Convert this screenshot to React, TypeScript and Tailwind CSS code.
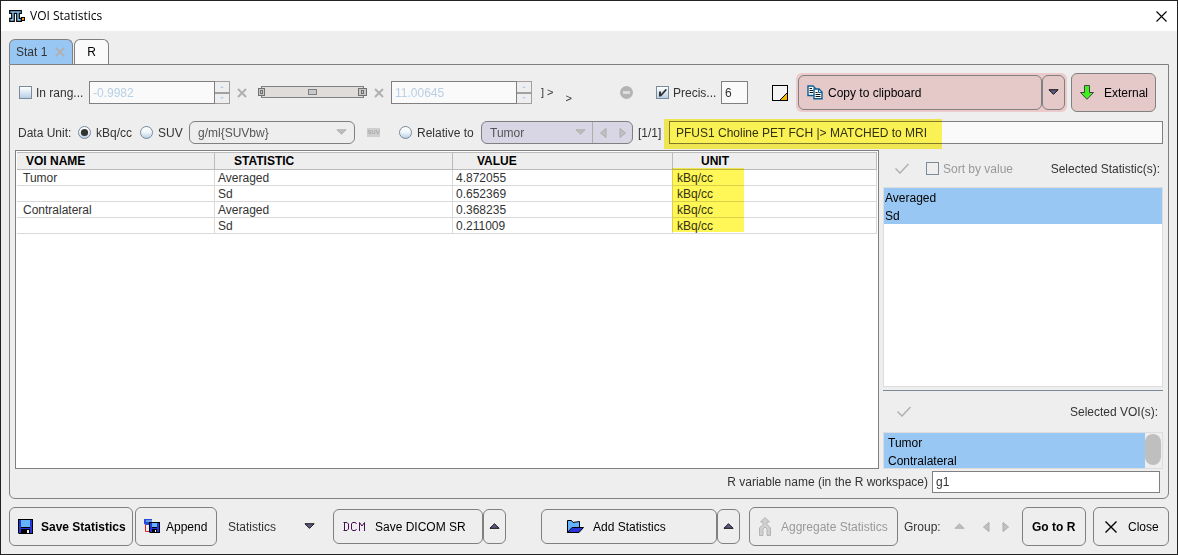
import type { ReactNode } from "react"

interface StatRow {
  voi: string
  statistic: string
  value: string
  unit: string
}

const rows: StatRow[] = [
  { voi: "Tumor", statistic: "Averaged", value: "4.872055", unit: "kBq/cc" },
  { voi: "", statistic: "Sd", value: "0.652369", unit: "kBq/cc" },
  { voi: "Contralateral", statistic: "Averaged", value: "0.368235", unit: "kBq/cc" },
  { voi: "", statistic: "Sd", value: "0.211009", unit: "kBq/cc" },
]

const arrowPaths = {
  up: "M5.5 0.5 L10.5 5.5 H0.5 Z",
  down: "M0.5 0.5 H10.5 L5.5 5.5 Z",
}

function Arrow({ direction, disabled }: { direction: "up" | "down"; disabled?: boolean }) {
  return (
    <svg width="11" height="7" viewBox="-0.5 0 12 7" className="block shrink-0" aria-hidden="true">
      <path
        d={arrowPaths[direction]}
        fill={disabled ? "#bdbdbd" : "#5c5c84"}
        stroke={disabled ? "#b0b0b0" : "#000"}
      />
    </svg>
  )
}

function SideArrow({ direction }: { direction: "left" | "right" }) {
  return (
    <svg width="7" height="10" viewBox="0 0 7 10" className="block" aria-hidden="true">
      <path d={direction === "left" ? "M6 0.5 V9.5 L0.5 5 Z" : "M1 0.5 V9.5 L6.5 5 Z"} fill="#c0c0c0" stroke="#adadad" />
    </svg>
  )
}

function Cross() {
  return (
    <svg width="10" height="10" viewBox="0 0 10 10" className="block shrink-0" aria-hidden="true">
      <path d="M1 1 L9 9 M9 1 L1 9" stroke="#b0b0b0" strokeWidth="2" />
    </svg>
  )
}

function ApplyButton({ label }: { label: string }) {
  return (
    <button type="button" aria-label={label} disabled>
      <svg width="14" height="11" viewBox="0 0 14 11" aria-hidden="true">
        <path d="M0.5 5.5 L5 10 L13.5 1" fill="none" stroke="#b0b0b0" strokeWidth="1.5" />
      </svg>
    </button>
  )
}

function Checkbox({ id, checked, plain }: { id: string; checked?: boolean; plain?: boolean }) {
  return (
    <span className="relative block size-[13px] shrink-0">
      <input
        id={id}
        type="checkbox"
        defaultChecked={checked}
        disabled={plain}
        className={
          plain
            ? "block size-[13px] appearance-none border border-[#7a8a99] bg-[#eeeeee]"
            : "block size-[13px] appearance-none border border-[#7a8a99] bg-linear-to-b from-white to-[#b8cfe5]"
        }
      />
      {checked && (
        <svg width="13" height="13" viewBox="0 0 13 13" className="pointer-events-none absolute inset-0" aria-hidden="true">
          <path d="M3 5.5 H5 V8 L9.5 3 H10.5 V4.5 L5 10.5 H3 Z" fill="#333" />
        </svg>
      )}
    </span>
  )
}

function Radio({ id, name, checked }: { id: string; name: string; checked?: boolean }) {
  return (
    <span className="relative block size-[13px] shrink-0">
      <input
        id={id}
        name={name}
        type="radio"
        defaultChecked={checked}
        className="block size-[13px] appearance-none rounded-full border border-[#7a8a99] bg-linear-to-b from-white via-[#eef4fa] to-[#b8cfe5]"
      />
      {checked && (
        <svg width="13" height="13" viewBox="0 0 13 13" className="pointer-events-none absolute inset-0" aria-hidden="true">
          <circle cx="6.5" cy="6.5" r="3.6" fill="#333" />
        </svg>
      )}
    </span>
  )
}

function RangeField({ label, value }: { label: string; value: string }) {
  return (
    <div className="flex h-[23px] shrink-0">
      <input
        aria-label={label}
        defaultValue={value}
        className="w-[126px] border border-[#808080] bg-[#fafafa] px-[3px] text-[#b8cfe5]"
      />
      <div className="flex w-[15px] flex-col">
        <button type="button" aria-label={`${label} up`} className="flex flex-1 items-center justify-center border border-l-0 border-[#a0a0a0]">
          <svg width="4" height="2" viewBox="0 0 4 2" aria-hidden="true">
            <path d="M2 0 L4 2 H0 Z" fill="#b8cfe5" />
          </svg>
        </button>
        <button type="button" aria-label={`${label} down`} className="flex flex-1 items-center justify-center border border-l-0 border-[#a0a0a0]">
          <svg width="4" height="2" viewBox="0 0 4 2" aria-hidden="true">
            <path d="M0 0 H4 L2 2 Z" fill="#b8cfe5" />
          </svg>
        </button>
      </div>
    </div>
  )
}

function RangeSlider() {
  return (
    <svg width="110" height="12" viewBox="0 0 110 12" className="mb-0.5 shrink-0" aria-hidden="true">
      <rect x="3.5" y="0.5" width="102" height="11" fill="#e0dcda" stroke="#808080" />
      <rect x="0.5" y="2.5" width="6" height="7" fill="#c8c8c8" stroke="#707070" />
      <rect x="2.5" y="4.5" width="2" height="3" fill="#c8c8c8" stroke="#707070" />
      <rect x="50.5" y="3.5" width="8" height="5" fill="#c8c8c8" stroke="#808080" />
      <rect x="100.5" y="2.5" width="8" height="7" fill="#c8c8c8" stroke="#707070" />
      <rect x="103.5" y="4.5" width="2" height="3" fill="#c8c8c8" stroke="#707070" />
    </svg>
  )
}

function CopyIcon() {
  return (
    <svg width="16" height="15" viewBox="0 0 16 15" aria-hidden="true">
      <path d="M1 1 H6 L8.5 3.5 V10.5 H1 Z" fill="#fff" stroke="#0b5c94" strokeWidth="1.4" />
      <path d="M2.5 3.5 H5 M2.5 5.5 H6 M2.5 7.5 H6" stroke="#111" />
      <path d="M7 4 H12 L15 7 V13.8 H7 Z" fill="#fff" stroke="#0b5c94" strokeWidth="1.4" />
      <path d="M11.5 4 V7.5 H15" fill="none" stroke="#0b5c94" />
      <path d="M8.5 7.5 H10.5 M8.5 9.5 H13.5 M8.5 11.5 H13.5" stroke="#111" />
    </svg>
  )
}

function SaveIcon() {
  return (
    <svg width="15" height="15" viewBox="0 0 15 15" aria-hidden="true">
      <path d="M0 0 H15 V15 H1 L0 14 Z" fill="#000" />
      <path d="M1 1 H3 V9 H12 V1 H14 V14 H12 V10 H3 V14 H1 Z" fill="#2a35d8" />
      <path d="M3 1 H12 V8 H3 Z" fill="#63b4ff" />
      <path d="M9 11 H11 V14 H9 Z" fill="#eee" />
    </svg>
  )
}

function AppendIcon() {
  return (
    <svg width="16" height="15" viewBox="0 0 16 15" aria-hidden="true">
      <path d="M0 0 H8 V6 H2 L0 5 Z" fill="#2a4ad8" />
      <path d="M2 1 H8 V3 H2 Z" fill="#6d9ae8" />
      <path d="M1.5 6 V12.5 H6" fill="none" stroke="#e02020" />
      <path d="M5 3 H16 V14 H6 L5 13 Z" fill="#000" />
      <path d="M6 4 H8 V9 H13 V4 H15 V13 H13 V10 H8 V13 H6 Z" fill="#2a35d8" />
      <path d="M8 4 H13 V8 H8 Z" fill="#63b4ff" />
      <path d="M11 11 H12 V13 H11 Z" fill="#eee" />
    </svg>
  )
}

function DicomIcon() {
  return (
    <svg width="22" height="9" viewBox="0 0 22 9" fill="none" stroke="#4a0d55" role="img" aria-label="DCM">
      <path d="M0.5 0.5 H4 L5.5 2 V7 L4 8.5 H0.5 M1.5 0.5 V8.5" />
      <path d="M13.5 2 L12.5 0.5 H9.5 L8.5 2 V7 L9.5 8.5 H12.5 L13.5 7" />
      <path d="M16.5 9 V0.5 L19 4 L21.5 0.5 V9" />
    </svg>
  )
}

function FolderIcon() {
  return (
    <svg width="17" height="13" viewBox="0 0 17 13" aria-hidden="true">
      <path d="M0.5 12.5 V0.5 H4.5 L6 2.5 L12.5 1.5 V7.5" fill="#63b4ff" stroke="#000" />
      <path d="M0.5 12.5 L5 7.5 H16.5 L12 12.5 Z" fill="#2a35d8" stroke="#000" />
    </svg>
  )
}

function MergeIcon() {
  return (
    <svg width="12" height="19" viewBox="0 0 12 19" aria-hidden="true">
      <path
        d="M6 0.5 L10.5 5 H8 V7.5 L11.5 11 V18.5 H8 V12 L6 10 L4 12 V18.5 H0.5 V11 L4 7.5 V5 H1.5 Z"
        fill="#d0d0d0"
        stroke="#b4b4b4"
      />
    </svg>
  )
}

interface ToolButtonProps {
  children: ReactNode
  className: string
  disabled?: boolean
}

function ToolButton({ children, className, disabled }: ToolButtonProps) {
  return (
    <button
      type="button"
      disabled={disabled}
      className={`flex shrink-0 items-center rounded-md border border-[#808080] text-black disabled:text-[#999999] ${className}`}
    >
      {children}
    </button>
  )
}

function TitleBar() {
  return (
    <header className="flex h-[30px] items-center gap-1 bg-white pr-[10px] pl-2 font-['Open_Sans',sans-serif] text-black">
      <svg width="17" height="12" viewBox="0 0 17 12" aria-hidden="true">
        <path
          d="M0.7 0.7 H12.3 V3.3 H10.3 V8.3 H12.3 V11.3 H7.7 V3.3 H5.3 V11.3 H0.7 V8.3 H2.7 V3.3 H0.7 Z"
          fill="#86c5f4"
          stroke="#000"
          strokeWidth="1.2"
        />
        <rect x="12.5" y="7.5" width="3" height="3" fill="#f59a1c" stroke="#000" />
      </svg>
      <h1 className="flex-1">VOI Statistics</h1>
      <button type="button" aria-label="Close window">
        <svg width="11" height="11" viewBox="0 0 11 11" aria-hidden="true">
          <path d="M0.5 0.5 L10.5 10.5 M10.5 0.5 L0.5 10.5" stroke="#000" strokeWidth="1.1" />
        </svg>
      </button>
    </header>
  )
}

function Tabs() {
  return (
    <div role="tablist" className="flex h-[25px] gap-px">
      <div className="flex w-16 items-center gap-2 rounded-t-md border border-b-0 border-[#808080] bg-[#99c7f3] pl-1.5">
        <button type="button" role="tab" aria-selected="true">
          Stat 1
        </button>
        <button type="button" aria-label="Close Stat 1">
          <Cross />
        </button>
      </div>
      <button
        type="button"
        role="tab"
        aria-selected="false"
        className="w-[35px] rounded-t-md border border-b-0 border-[#808080] bg-[#fafafa] text-black"
      >
        R
      </button>
    </div>
  )
}

function RangeRow() {
  return (
    <div className="flex h-[39px] items-center pr-[7px] pl-1">
      <Checkbox id="in-range" />
      <label htmlFor="in-range" className="ml-1 w-[53px] shrink-0">
        In rang...
      </label>
      <RangeField label="Lower limit" value="-0.9982" />
      <button type="button" aria-label="Clear lower limit" className="mr-[11px] ml-[7px]">
        <Cross />
      </button>
      <RangeSlider />
      <button type="button" aria-label="Clear upper limit" className="mr-[7px] ml-1.5">
        <Cross />
      </button>
      <RangeField label="Upper limit" value="11.00645" />
      <span className="ml-[9px] shrink-0 text-[11px]">] &gt;</span>
      <span className="mt-3 ml-3 text-[11px]">&gt;</span>
      <div className="min-w-2 flex-1" />
      <svg width="13" height="13" viewBox="0 0 13 13" className="mr-[23px] shrink-0" aria-hidden="true">
        <circle cx="6.5" cy="6.5" r="6.5" fill="#b4b4b4" />
        <rect x="3" y="5" width="7" height="3" fill="#dcdcdc" />
      </svg>
      <Checkbox id="precision" checked />
      <label htmlFor="precision" className="ml-1 w-12 shrink-0">
        Precis...
      </label>
      <input
        aria-label="Precision digits"
        defaultValue="6"
        className="h-[23px] w-[27px] shrink-0 border border-[#808080] bg-[#fafafa] px-[3px]"
      />
      <svg width="16" height="16" viewBox="0 0 16 16" className="mr-2 ml-6 shrink-0" aria-hidden="true">
        <rect x="0.5" y="0.5" width="15" height="15" fill="#f4f4f4" stroke="#000" />
        <path d="M15.5 7.5 V15.5 H7.5 Z" fill="#f5b800" stroke="#000" />
      </svg>
      <div className="mr-1 flex h-[39px] shrink-0 rounded-md bg-[#eccaca] p-0.5">
        <ToolButton className="w-[244px] gap-[5px] bg-[#e5c8c8] pl-2">
          <CopyIcon />
          Copy to clipboard
        </ToolButton>
        <ToolButton className="w-[23px] justify-center bg-[#e5c8c8]">
          <Arrow direction="down" />
        </ToolButton>
      </div>
      <ToolButton className="h-[39px] w-[85px] gap-[10px] bg-[#e5c8c8] pl-2">
        <svg width="14" height="15" viewBox="0 0 14 15" aria-hidden="true">
          <path d="M4.5 0.5 H9.5 V7.5 H13.5 L7 14.3 L0.5 7.5 H4.5 Z" fill="#42ef1e" stroke="#444" />
        </svg>
        External
      </ToolButton>
    </div>
  )
}

function UnitRow() {
  return (
    <div className="mt-[9px] flex h-[23px] items-center pl-[3px]">
      <span className="w-[60px] shrink-0">Data Unit:</span>
      <Radio id="unit-kbq" name="unit" checked />
      <label htmlFor="unit-kbq" className="ml-[5px] w-11 shrink-0">
        kBq/cc
      </label>
      <Radio id="unit-suv" name="unit" />
      <label htmlFor="unit-suv" className="ml-[5px] w-[31px] shrink-0">
        SUV
      </label>
      <div className="relative h-[23px] w-[166px] shrink-0">
        <select aria-label="SUV unit" className="size-full appearance-none rounded-md border border-[#808080] px-2 text-[#555555]">
          <option>g/ml{"{SUVbw}"}</option>
        </select>
        <span className="pointer-events-none absolute top-2 right-2">
          <Arrow direction="down" disabled />
        </span>
      </div>
      <span className="mr-[19px] ml-3 w-[13px] shrink-0 overflow-hidden bg-[#cfcfcf] text-center text-[6px] leading-[9px] text-[#999999]">
        SUV
      </span>
      <Radio id="unit-relative" name="unit" />
      <label htmlFor="unit-relative" className="ml-[5px] w-16 shrink-0">
        Relative to
      </label>
      <div className="flex h-[23px] w-[152px] shrink-0 rounded-md border border-[#808080] bg-[#d8d5e5]">
        <div className="relative flex-1">
          <select aria-label="Reference VOI" className="size-full appearance-none pl-2 text-[#555555]">
            <option>Tumor</option>
          </select>
          <span className="pointer-events-none absolute top-[7px] right-1.5">
            <Arrow direction="down" disabled />
          </span>
        </div>
        <div className="flex w-10 items-center justify-center gap-3 border-l border-[#adadad]">
          <button type="button" aria-label="Previous VOI">
            <SideArrow direction="left" />
          </button>
          <button type="button" aria-label="Next VOI">
            <SideArrow direction="right" />
          </button>
        </div>
      </div>
      <span className="mx-[5px] w-[26px] shrink-0">[1/1]</span>
      <div className="relative min-w-0 flex-1">
        <input
          aria-label="Series"
          defaultValue="PFUS1 Choline PET FCH |> MATCHED to MRI"
          className="block h-[23px] w-full border border-[#808080] bg-[#fafafa] px-1.5"
        />
        <div className="pointer-events-none absolute -top-0.5 -left-[5px] h-[30px] w-[278px] bg-[#fff657] mix-blend-multiply" />
      </div>
    </div>
  )
}

function StatsTable() {
  return (
    <div className="relative min-w-0 flex-1 border border-[#808080] bg-white p-px">
      <table className="w-full table-fixed border-separate border-spacing-0 text-left">
        <colgroup>
          <col className="w-[198px]" />
          <col className="w-[238px]" />
          <col className="w-[220px]" />
          <col />
        </colgroup>
        <thead className="bg-[#eeeeee] leading-[15px] text-black">
          <tr className="h-[18px] *:border-y *:border-r *:border-[#bbbbbb] *:p-0 *:font-bold">
            <th>
              <span className="pl-[9px]">VOI NAME</span>
            </th>
            <th>
              <span className="pl-[19px]">STATISTIC</span>
            </th>
            <th>
              <span className="pl-6">VALUE</span>
            </th>
            <th>
              <span className="pl-7">UNIT</span>
            </th>
          </tr>
        </thead>
        <tbody className="leading-[13px]">
          {rows.map((row, index) => (
            <tr key={index} className="h-4 *:border-r *:border-b *:border-[#d9d9d9] *:p-0 *:pt-0.5">
              <td>
                <span className="pl-1.5">{row.voi}</span>
              </td>
              <td>
                <span className="pl-[3px]">{row.statistic}</span>
              </td>
              <td>
                <span className="pl-[3px]">{row.value}</span>
              </td>
              <td>
                <span className="pl-1">{row.unit}</span>
              </td>
            </tr>
          ))}
        </tbody>
      </table>
      <div className="pointer-events-none absolute top-[17px] left-[656px] h-16 w-[72px] bg-[#fff657] mix-blend-multiply" />
    </div>
  )
}

function SelectionPanel() {
  return (
    <aside className="flex w-[280px] shrink-0 flex-col">
      <div className="flex h-[37px] items-center pr-[3px] pl-3">
        <ApplyButton label="Apply statistics" />
        <div className="ml-[17px]">
          <Checkbox id="sort" plain />
        </div>
        <label htmlFor="sort" className="ml-1 flex-1 text-[#999999]">
          Sort by value
        </label>
        <h2>Selected Statistic(s):</h2>
      </div>
      <ul role="listbox" aria-label="Selected statistics" className="flex-1 border border-[#dddddd] bg-white text-black">
        {["Averaged", "Sd"].map((item) => (
          <li key={item} role="option" aria-selected="true" className="h-[18px] bg-[#99c7f3] px-px pt-0.5 leading-4">
            {item}
          </li>
        ))}
      </ul>
      <div className="mt-[3px] border-t border-[#7a8a99]" />
      <div className="flex h-[41px] items-center justify-between pr-[5px] pl-[14px]">
        <ApplyButton label="Apply VOIs" />
        <h2>Selected VOI(s):</h2>
      </div>
      <div className="flex h-[37px] overflow-hidden border border-[#dddddd]">
        <ul role="listbox" aria-label="Selected VOIs" className="flex-1 text-black">
          {["Tumor", "Contralateral"].map((item) => (
            <li key={item} role="option" aria-selected="true" className="h-[18px] bg-[#99c7f3] px-1 pt-0.5 leading-4">
              {item}
            </li>
          ))}
        </ul>
        <div className="w-[17px] pt-px pr-px">
          <div className="h-[31px] rounded-lg bg-[#bfbfbf]" />
        </div>
      </div>
    </aside>
  )
}

function Footer() {
  return (
    <footer className="mt-2 flex h-[39px] items-center">
      <ToolButton className="mr-0.5 h-[39px] w-[124px] gap-2 pl-2 font-bold">
        <SaveIcon />
        Save Statistics
      </ToolButton>
      <ToolButton className="h-[39px] w-[82px] gap-1.5 pl-2">
        <AppendIcon />
        Append
      </ToolButton>
      <div className="relative mr-[18px] ml-[11px] w-[87px] shrink-0">
        <select aria-label="Save target" className="block w-full appearance-none">
          <option>Statistics</option>
        </select>
        <span className="pointer-events-none absolute top-1 right-0">
          <Arrow direction="down" />
        </span>
      </div>
      <ToolButton className="h-[35px] w-[150px] gap-[10px] pl-[9px]">
        <DicomIcon />
        Save DICOM SR
      </ToolButton>
      <ToolButton className="h-[35px] w-[23px] justify-center">
        <Arrow direction="up" />
      </ToolButton>
      <div className="min-w-1 flex-1" />
      <ToolButton className="h-[35px] w-[176px] gap-[9px] pl-[25px]">
        <FolderIcon />
        Add Statistics
      </ToolButton>
      <ToolButton className="mr-[9px] h-[35px] w-[23px] justify-center">
        <Arrow direction="up" />
      </ToolButton>
      <ToolButton disabled className="mr-1.5 h-[39px] w-[149px] gap-[10px] pl-[9px]">
        <MergeIcon />
        Aggregate Statistics
      </ToolButton>
      <span className="w-[50px] shrink-0">Group:</span>
      <button type="button" aria-label="Group list" className="mr-[18px]">
        <Arrow direction="up" disabled />
      </button>
      <button type="button" aria-label="Previous group" className="mr-3">
        <SideArrow direction="left" />
      </button>
      <button type="button" aria-label="Next group" className="mr-[13px]">
        <SideArrow direction="right" />
      </button>
      <ToolButton className="mr-[7px] h-[39px] w-16 pl-[9px] font-bold">Go to R</ToolButton>
      <ToolButton className="h-[39px] w-[76px] gap-[11px] pl-[11px]">
        <svg width="12" height="12" viewBox="0 0 12 12" aria-hidden="true">
          <path d="M0.5 0.5 L11.5 11.5 M11.5 0.5 L0.5 11.5" stroke="#000" strokeWidth="1.4" />
        </svg>
        Close
      </ToolButton>
    </footer>
  )
}

export default function App() {
  return (
    <div className="flex min-h-screen flex-col border border-[#222222] bg-[#eeeeee] font-['Liberation_Sans',Arial,sans-serif] text-xs text-[#333333]">
      <TitleBar />
      <main className="flex flex-1 flex-col p-2">
        <Tabs />
        <section className="flex flex-1 flex-col rounded-b-md border border-[#808080] px-[5px] pt-2 pb-[5px]">
          <RangeRow />
          <UnitRow />
          <div className="mt-1.5 flex flex-1 gap-1">
            <StatsTable />
            <SelectionPanel />
          </div>
          <div className="mt-0.5 flex items-center justify-end gap-1 pr-[3px]">
            <label htmlFor="r-variable">R variable name (in the R workspace)</label>
            <input
              id="r-variable"
              defaultValue="g1"
              className="h-[22px] w-[228px] border border-[#808080] bg-white px-[3px]"
            />
          </div>
        </section>
        <Footer />
      </main>
    </div>
  )
}
